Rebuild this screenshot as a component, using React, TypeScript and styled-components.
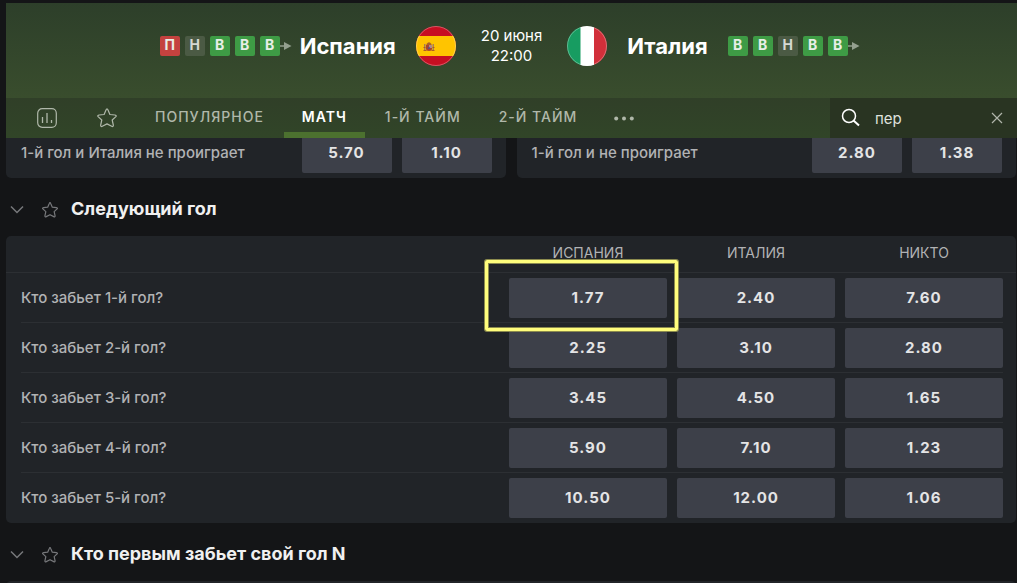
import React from "react";
import styled, { createGlobalStyle, css } from "styled-components";

type Result = "win" | "draw" | "loss";

const GlobalStyle = createGlobalStyle`
  *, *::before, *::after { box-sizing: border-box; }
  body {
    margin: 0;
    background: #141517;
    color: #e6e6e6;
    font-family: Inter, "Liberation Sans", sans-serif;
    font-size: 14px;
    overflow: hidden;
  }
  button, input { font: inherit; color: inherit; border: 0; padding: 0; margin: 0; }
  button { cursor: pointer; }
`;

const Page = styled.main`
  padding: 3px 0 0 6px;
`;

const Top = styled.header`
  position: relative;
  z-index: 2;
`;

const Scoreboard = styled.div`
  display: grid;
  grid-template-columns: 1fr auto 1fr;
  align-items: center;
  column-gap: 25px;
  height: 95px;
  padding-bottom: 9px;
  background: linear-gradient(#2d3f2a, #394d2d);
`;

const Side = styled.div<{ $end?: boolean }>`
  display: flex;
  align-items: center;
  gap: 20px;
  justify-content: ${(p) => (p.$end ? "flex-end" : "flex-start")};
`;

const TeamName = styled.h1`
  margin: 0;
  color: #fff;
  font-size: 22px;
  line-height: 28px;
  font-weight: 700;
`;

const FormAndName = styled.div`
  display: flex;
  align-items: center;
  gap: 8px;
`;

const Form = styled.div`
  display: flex;
  align-items: center;
`;

const Badges = styled.div`
  display: flex;
  gap: 5px;
`;

const resultColors: Record<Result, string> = {
  win: "#3e9b45",
  draw: "#4b5a44",
  loss: "#c4423f",
};

const Badge = styled.span<{ $result: Result }>`
  width: 20px;
  height: 20px;
  border-radius: 2px;
  background: ${(p) => resultColors[p.$result]};
  color: ${(p) => (p.$result === "draw" ? "#d5d8d3" : "#e8efe6")};
  font-size: 14px;
  line-height: 18px;
  font-weight: 700;
  text-align: center;
`;

const Kickoff = styled.time`
  color: #fff;
  font-size: 15px;
  line-height: 20px;
  text-align: center;
`;

const Nav = styled.nav`
  display: flex;
  height: 40px;
  padding-left: 11px;
  background: linear-gradient(#303f28, #314528);
  color: #b0b8aa;
`;

const Tabs = styled.div`
  display: flex;
  gap: 2px;
`;

const IconButton = styled.button<{ $narrow?: boolean }>`
  display: flex;
  align-items: center;
  justify-content: center;
  width: ${(p) => (p.$narrow ? "54px" : "60px")};
  background: none;
`;

const Tab = styled.button<{ $active?: boolean }>`
  padding: 0 18px 2px;
  background: none;
  font-size: 14px;
  line-height: 38px;
  font-weight: 500;
  letter-spacing: 1px;
  ${(p) =>
    p.$active &&
    css`
      color: #fff;
      font-weight: 600;
      box-shadow: inset 0 -6px #4c712f;
    `}
`;

const Search = styled.label`
  display: flex;
  align-items: center;
  gap: 14px;
  width: 187px;
  margin-left: auto;
  padding: 0 14px 0 11px;
  background: #293422;
  color: #fff;
`;

const SearchInput = styled.input`
  flex: 1;
  min-width: 0;
  background: none;
  outline: 0;
  color: #dfe1dd;
  font-size: 15px;
`;

const ClearButton = styled.button`
  display: flex;
  background: none;
  color: #b0b5ab;
`;

const Markets = styled.div`
  padding-right: 1px;
`;

const PairRow = styled.div`
  display: grid;
  grid-template-columns: 1fr 1fr;
  gap: 11px;
  margin-top: -10px;
`;

const Panel = styled.div`
  border-radius: 5px;
  background: #212428;
`;

const MarketRow = styled(Panel)`
  display: flex;
  align-items: center;
  gap: 10px;
  height: 50px;
  padding: 0 14px 0 15px;
  color: #b1b2b4;
  font-size: 15px;
  font-weight: 500;
`;

const MarketLabel = styled.span`
  flex: 1;
  padding-bottom: 2px;
`;

const Odd = styled.button<{ $compact?: boolean }>`
  width: ${(p) => (p.$compact ? "90px" : "100%")};
  height: 40px;
  padding-bottom: 2px;
  border-radius: 2px;
  background: #3d4049;
  color: #e4e4e5;
  font-size: 15px;
  font-weight: 700;
  letter-spacing: 1px;
`;

const SectionHead = styled.div`
  display: flex;
  align-items: center;
  height: 58px;
  padding: 4px 0 0 4px;
`;

const HeadButton = styled.button<{ $gap: number }>`
  display: flex;
  background: none;
  color: #77787b;
  margin-right: ${(p) => p.$gap}px;
  padding-top: 2px;
`;

const SectionTitle = styled.h2`
  margin: 0;
  color: #f0f0f0;
  font-size: 18px;
  line-height: 24px;
  font-weight: 700;
`;

const TablePanel = styled(Panel)`
  padding-right: 8px;
`;

const OddsTable = styled.table`
  width: 100%;
  table-layout: fixed;
  border-collapse: separate;
  border-spacing: 0;
  color: #b1b2b4;
`;

const ruled = css`
  position: relative;

  &::after {
    content: "";
    position: absolute;
    left: 0;
    right: 0;
    bottom: 0;
    height: 1px;
    background: #2c2f33;
  }
`;

const ColumnHead = styled.th`
  ${ruled}
  width: 168px;
  height: 37px;
  padding: 0 0 4px;
  font-size: 14px;
  font-weight: 400;

  &:first-child { width: auto; }
  &:last-child::after { right: -8px; }
`;

const RowHead = styled.th`
  ${ruled}
  padding: 0 0 2px 15px;
  text-align: left;
  font-size: 15px;
  font-weight: 500;

  &::after { left: 15px; }
  tr:last-child > &::after { display: none; }
`;

const OddCell = styled.td`
  ${ruled}
  height: 50px;
  padding: 5px;

  &:last-child::after { right: 5px; }
  tr:last-child > &::after { display: none; }
`;

const Highlight = styled.div`
  position: absolute;
  z-index: 1;
  inset: -13px -6px -8px -19px;
  border: 3px solid #fffd7c;
  border-radius: 2px;
  box-shadow: 0 0 0 1px #8b8a4e, inset 0 0 0 1px #8b8a4e;
  pointer-events: none;
`;

const StarIcon = ({ size }: { size: number }) => (
  <svg width={size} height={size} viewBox="0 0 20 20" fill="none" stroke="currentColor" strokeWidth={24 / size} strokeLinejoin="round">
    <path d="M10 .9c.5 0 .8.7 1 1.2l1.9 4.4 5 .5c1.1.1 1.7.9 1 1.6l-3.7 3.4 1.1 5c.2 1.3-.6 1.9-1.6 1.3L10 15.900l-4.700 2.400c-1 .6-1.800 0-1.600-1.300l1.100-5L1.100 8.600C.4 7.900 1 7.100 2.100 7l5-.5L9 2.100c.2-.5.5-1.200 1-1.200z" />
  </svg>
);

const StatsIcon = () => (
  <svg width="20" height="20" viewBox="0 0 20 20" fill="none" stroke="currentColor">
    <rect x=".7" y=".7" width="18.600" height="18.600" rx="4.500" strokeWidth="1.200" />
    <path d="M5.500 9v6M10 5v10M14.500 12v3" strokeWidth="1.300" />
  </svg>
);

const ChevronIcon = () => (
  <svg width="14" height="10" viewBox="0 0 14 10" fill="none" stroke="currentColor" strokeWidth="1.500">
    <path d="M1 1.500l6 6 6-6" />
  </svg>
);

const DotsIcon = () => (
  <svg width="20" height="6" viewBox="0 0 20 6" fill="currentColor">
    <circle cx="2.200" cy="3.500" r="2" />
    <circle cx="10" cy="3.500" r="2" />
    <circle cx="17.800" cy="3.500" r="2" />
  </svg>
);

const SearchIcon = () => (
  <svg width="20" height="20" viewBox="0 0 20 20" fill="none" stroke="currentColor">
    <circle cx="8" cy="8" r="6.500" strokeWidth="1.500" />
    <path d="M12.500 12.500l5.500 5" strokeWidth="2" />
  </svg>
);

const CloseIcon = () => (
  <svg width="12" height="12" viewBox="0 0 12 12" fill="none" stroke="currentColor" strokeWidth="1.200">
    <path d="M1 1l10 10M11 1L1 11" />
  </svg>
);

const ArrowIcon = () => (
  <svg width="12" height="10" viewBox="0 0 12 10">
    <path d="M0 4.300h4V1l7.500 4L4 9V5.700H0z" fill="#94a08f" />
  </svg>
);

const SpainFlag = () => (
  <svg width="40" height="40" viewBox="0 0 40 40" role="img" aria-label="Флаг Испании">
    <clipPath id="es"><circle cx="20" cy="20" r="20" /></clipPath>
    <g clipPath="url(#es)">
      <rect width="40" height="40" fill="#c70e22" />
      <rect y="10" width="40" height="20" fill="#ffc400" />
      <rect x="8" y="18" width="1.500" height="7" fill="#aa8050" />
      <rect x="16.500" y="18" width="1.500" height="7" fill="#aa8050" />
      <path d="M10.500 18q2.500-3.500 5 0v1.500h-5z" fill="#a9602a" />
      <path d="M10 19h6v3.500q0 2.500-3 2.500t-3-2.500z" fill="#a8452e" />
      <path d="M13 19h3v3h-3z" fill="#b08a86" />
      <circle cx="13" cy="22" r="1" fill="#50528e" />
      <path d="M7.500 21.500h2M16.500 21.500h2M7.500 24.500h3M15.500 24.500h3" stroke="#ad5a28" />
    </g>
    <circle cx="20" cy="20" r="19.500" fill="none" stroke="#fff" strokeOpacity=".3" />
  </svg>
);

const ItalyFlag = () => (
  <svg width="40" height="40" viewBox="0 0 40 40" role="img" aria-label="Флаг Италии">
    <clipPath id="it"><circle cx="20" cy="20" r="20" /></clipPath>
    <g clipPath="url(#it)">
      <rect width="14" height="40" fill="#179c61" />
      <rect x="13.500" width="13.500" height="40" fill="#fff" />
      <rect x="27" width="13" height="40" fill="#d22f3a" />
    </g>
    <circle cx="20" cy="20" r="19.500" fill="none" stroke="#fff" strokeOpacity=".3" />
  </svg>
);

const letters: Record<Result, string> = { win: "В", draw: "Н", loss: "П" };

const TeamForm = ({ results }: { results: Result[] }) => (
  <Form>
    <Badges>
      {results.map((r, i) => (
        <Badge key={i} $result={r}>{letters[r]}</Badge>
      ))}
    </Badges>
    <ArrowIcon />
  </Form>
);

const SectionHeader = ({ title }: { title: string }) => (
  <SectionHead>
    <HeadButton $gap={18} aria-label="Свернуть"><ChevronIcon /></HeadButton>
    <HeadButton $gap={13} aria-label="В избранное"><StarIcon size={16} /></HeadButton>
    <SectionTitle>{title}</SectionTitle>
  </SectionHead>
);

const pairs = [
  { label: "1-й гол и Италия не проиграет", odds: ["5.70", "1.10"] },
  { label: "1-й гол и не проиграет", odds: ["2.80", "1.38"] },
];

const goals = [
  ["1.77", "2.40", "7.60"],
  ["2.25", "3.10", "2.80"],
  ["3.45", "4.50", "1.65"],
  ["5.90", "7.10", "1.23"],
  ["10.50", "12.00", "1.06"],
];

export default function App() {
  return (
    <>
      <GlobalStyle />
      <Page>
        <Top>
          <Scoreboard>
            <Side $end>
              <FormAndName>
                <TeamForm results={["loss", "draw", "win", "win", "win"]} />
                <TeamName>Испания</TeamName>
              </FormAndName>
              <SpainFlag />
            </Side>
            <Kickoff>20 июня<br />22:00</Kickoff>
            <Side>
              <ItalyFlag />
              <TeamName>Италия</TeamName>
              <TeamForm results={["win", "win", "draw", "win", "win"]} />
            </Side>
          </Scoreboard>
          <Nav>
            <IconButton aria-label="Статистика"><StatsIcon /></IconButton>
            <IconButton aria-label="Избранное"><StarIcon size={20} /></IconButton>
            <Tabs>
              <Tab>ПОПУЛЯРНОЕ</Tab>
              <Tab $active>МАТЧ</Tab>
              <Tab>1-Й ТАЙМ</Tab>
              <Tab>2-Й ТАЙМ</Tab>
              <IconButton $narrow aria-label="Ещё"><DotsIcon /></IconButton>
            </Tabs>
            <Search>
              <SearchIcon />
              <SearchInput aria-label="Поиск" defaultValue="пер" />
              <ClearButton aria-label="Очистить"><CloseIcon /></ClearButton>
            </Search>
          </Nav>
        </Top>
        <Markets>
          <PairRow>
            {pairs.map((m) => (
              <MarketRow key={m.label}>
                <MarketLabel>{m.label}</MarketLabel>
                {m.odds.map((o) => <Odd key={o} $compact>{o}</Odd>)}
              </MarketRow>
            ))}
          </PairRow>
          <SectionHeader title="Следующий гол" />
          <TablePanel>
            <OddsTable>
              <thead>
                <tr>
                  <ColumnHead />
                  <ColumnHead scope="col">ИСПАНИЯ</ColumnHead>
                  <ColumnHead scope="col">ИТАЛИЯ</ColumnHead>
                  <ColumnHead scope="col">НИКТО</ColumnHead>
                </tr>
              </thead>
              <tbody>
                {goals.map((odds, row) => (
                  <tr key={row}>
                    <RowHead scope="row">Кто забьет {row + 1}-й гол?</RowHead>
                    {odds.map((o, col) => (
                      <OddCell key={col}>
                        <Odd>{o}</Odd>
                        {row === 0 && col === 0 && <Highlight />}
                      </OddCell>
                    ))}
                  </tr>
                ))}
              </tbody>
            </OddsTable>
          </TablePanel>
          <SectionHeader title="Кто первым забьет свой гол N" />
          <MarketRow />
        </Markets>
      </Page>
    </>
  );
}
